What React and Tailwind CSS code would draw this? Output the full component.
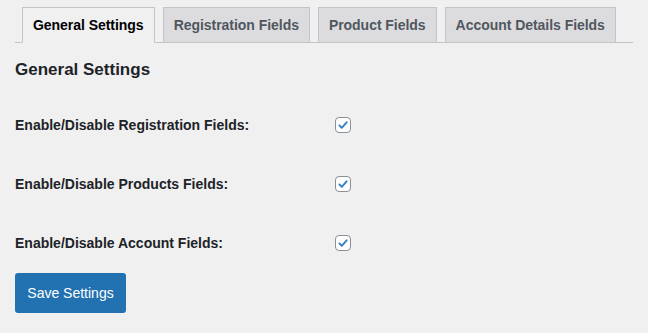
import { useState } from 'react';

const TABS = ['General Settings', 'Registration Fields', 'Product Fields', 'Account Details Fields'];

const ROWS = [
  'Enable/Disable Registration Fields:',
  'Enable/Disable Products Fields:',
  'Enable/Disable Account Fields:',
];

const Check = ({ checked, onToggle }) => (
  <button
    type="button"
    onClick={onToggle}
    className="w-4 h-4 flex items-center justify-center bg-white border border-[#8c8f94] rounded-[4px]"
  >
    {checked && (
      <svg viewBox="0 0 20 20" className="w-[20px] h-[20px]">
        <path d="M4.8 10.6l3.4 3.4 7-7.8" fill="none" stroke="#3582c4" strokeWidth="2.8" strokeLinecap="round" strokeLinejoin="round" />
      </svg>
    )}
  </button>
);

export default function App() {
  const [active, setActive] = useState(0);
  const [checks, setChecks] = useState([true, true, true]);

  return (
    <div className="min-h-screen bg-[#f0f0f1] px-[15px] text-[#1d2327]" style={{ fontFamily: '"Liberation Sans", Arial, sans-serif' }}>
      <nav className="flex pt-[7px] border-b border-[#c3c4c7]">
        {TABS.map((tab, i) => (
          <button
            key={tab}
            onClick={() => setActive(i)}
            className={`-mb-px border border-[#c3c4c7] px-[10px] py-[5px] text-[14px] leading-[24px] font-bold tracking-[-0.04px] ${
              i === 0 ? 'ml-[7px]' : 'ml-2'
            } ${i === active ? 'bg-[#f0f0f1] border-b-[#f0f0f1] text-black' : 'bg-[#dcdcde] text-[#50575e]'}`}
          >
            {tab}
          </button>
        ))}
      </nav>

      <h2 className="mt-4 text-[17px] leading-[22px] font-bold">General Settings</h2>

      <div className="mt-[32px] flex flex-col gap-[35px]">
        {ROWS.map((label, i) => (
          <div key={label} className="flex items-center h-6">
            <span className="w-[320px] text-[14px] font-bold">{label}</span>
            <Check
              checked={checks[i]}
              onToggle={() => setChecks(checks.map((c, j) => (j === i ? !c : c)))}
            />
          </div>
        ))}
      </div>

      <button className="mt-[18px] h-[40px] w-[111px] rounded-[3px] bg-[#2271b1] text-white text-[14px]">
        Save Settings
      </button>
    </div>
  );
}
